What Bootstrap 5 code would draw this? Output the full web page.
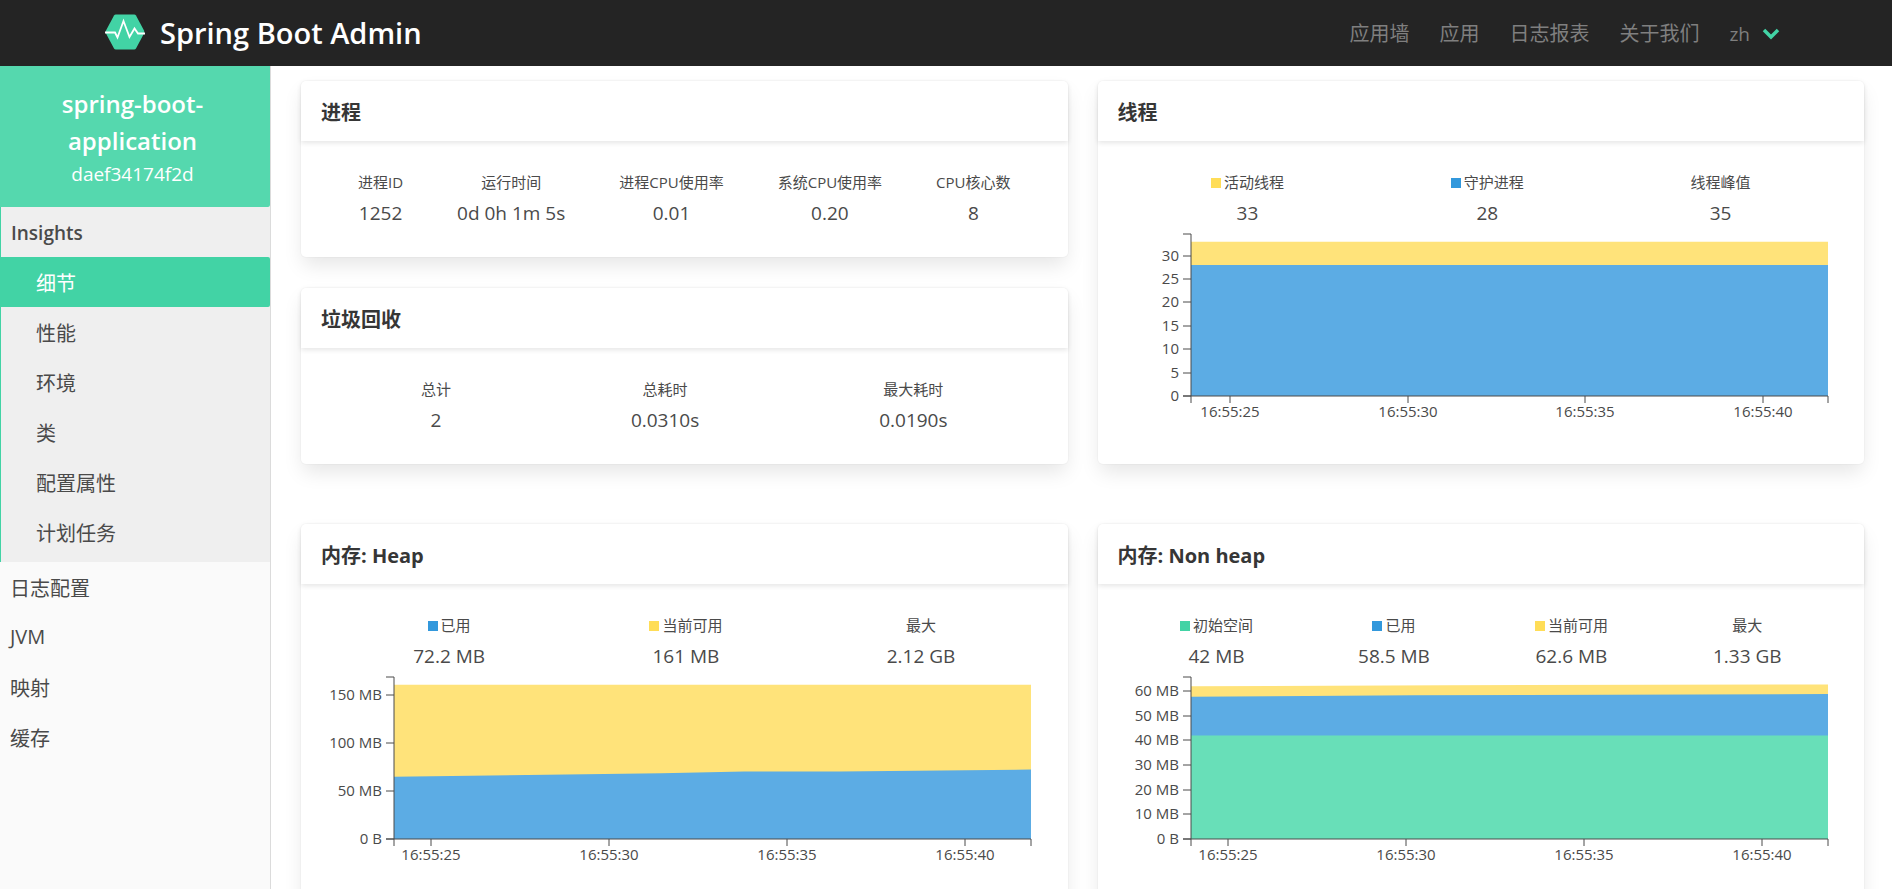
<!DOCTYPE html>
<html lang="zh">
<head>
<meta charset="utf-8">
<meta name="viewport" content="width=device-width, initial-scale=1">
<title>Spring Boot Admin</title>
<link href="https://cdn.jsdelivr.net/npm/bootstrap@5.3.0/dist/css/bootstrap.min.css" rel="stylesheet">
<style>
  :root {
    --sba-green: #42d3a5;
    --sba-blue: #3298dc;
    --sba-yellow: #ffdd57;
  }
  body {
    font-family: "Open Sans", "Noto Sans CJK SC", sans-serif;
    font-size: 20px;
    line-height: 30px;
    color: #4a4a4a;
    background: #fff;
  }
  a { color: inherit; text-decoration: none; }

  .topbar { height: 66px; padding: 0 105px; background: #242424; }
  .topbar .navbar-brand { gap: 15px; font-size: 29px; font-weight: 600; line-height: 36px; color: #fff; }
  .topbar .navbar-nav { gap: 30px; }
  .topbar .navbar-nav .nav-link { padding: 2px 0 0; color: #7f7f7f; }
  .topbar .navbar-nav .lang-btn { gap: 12px; font-size: 19px; padding-right: 7px; border: 0; background: none; }
  .topbar .lang-btn::after { display: none; }

  .sidebar { width: 271px; background: #fafafa; border-right: 1px solid #dbdbdb; }
  .instance { padding: 19px 20px 18px 15px; background: #55d8ae; color: #fff; border-radius: 0 0 2px 0; }
  .instance strong { font-size: 24px; font-weight: 600; line-height: 37px; }
  .instance span { font-size: 19px; line-height: 30px; }
  .side-group { background: #efefef; border-left: 1px solid var(--sba-green); padding-bottom: 5px; }
  .side-link { display: block; padding: 12px 10px 8px; }
  .side-link.side-latin { padding-top: 10px; padding-bottom: 10px; }
  .side-group .side-head { font-size: 19px; font-weight: 600; padding-top: 11px; padding-bottom: 9px; }
  .side-group .side-sub { padding-left: 35px; }
  .side-group .side-sub.active { margin-left: -1px; padding-left: 36px; color: #fff; background: var(--sba-green); border-radius: 0 2px 2px 0; }

  .content { padding: 15px 28px 30px 30px; overflow-y: auto; scrollbar-width: none; }
  .content::-webkit-scrollbar { display: none; }
  .content .row { --bs-gutter-x: 30px; }
  .row-memory { margin-top: 60px; }
  .panel { border: 0; border-radius: 5px; box-shadow: 0 10px 20px -2px rgba(10,10,10,.1), 0 0 0 1px rgba(10,10,10,.02); }
  .panel .card-header { padding: 17px 20px 13px; border: 0; background: none; box-shadow: 0 2px 5px rgba(10,10,10,.1); }
  .panel h2 { margin: 0; font-size: 20px; line-height: 30px; font-weight: 700; color: #363636; }
  .panel .card-body { padding: 30px 30px 29px; }
  .stat-name { font-size: 15px; line-height: 22px; margin-bottom: 5px; }
  .stat-value { font-size: 19px; line-height: 30px; }
  .swatch { width: 10px; height: 10px; margin-right: 3px; display: inline-block; }
  .swatch-blue { background: var(--sba-blue); }
  .swatch-yellow { background: var(--sba-yellow); }
  .swatch-green { background: var(--sba-green); }

  .chart { height: 207px; }
  .chart svg { display: block; width: 100%; height: 207px; overflow: visible; }
  .chart text { font-size: 15px; fill: #4a4a4a; }
  .chart .axis { fill: none; stroke: #4a4a4a; stroke-width: 1; }
  .area-blue { fill: #5cace4; }
  .area-yellow { fill: #ffe37a; }
  .area-green { fill: #68dfb8; }
</style>
</head>
<body class="vh-100 d-flex flex-column overflow-hidden">

<nav class="topbar navbar navbar-expand flex-shrink-0">
  <a class="navbar-brand d-flex align-items-center p-0 m-0" href="#">
    <svg width="40" height="40" viewBox="0 0 40 40" aria-hidden="true">
      <path d="M10.800 1.500h18.400q1.200 0 1.800 1l8 15q.600 1.500 0 3l-8 15q-.600 1-1.800 1H10.800q-1.200 0-1.800-1l-8-15q-.600-1.500 0-3l8-15q.600-1 1.800-1z" fill="#42d3a5"/>
      <path d="M0 19.500h10l2.500 5L18.500 8l6 16 5-8.500 3.500 5h7" fill="none" stroke="#fff" stroke-width="1.800"/>
    </svg>
    <span>Spring Boot Admin</span>
  </a>
  <ul class="navbar-nav ms-auto">
    <li class="nav-item"><a class="nav-link" href="#">应用墙</a></li>
    <li class="nav-item"><a class="nav-link" href="#">应用</a></li>
    <li class="nav-item"><a class="nav-link" href="#">日志报表</a></li>
    <li class="nav-item"><a class="nav-link" href="#">关于我们</a></li>
    <li class="nav-item dropdown">
      <button class="nav-link lang-btn dropdown-toggle d-flex align-items-center" type="button" data-bs-toggle="dropdown" aria-expanded="false">zh
        <svg width="18" height="12" viewBox="0 0 18 12" aria-hidden="true"><path d="M2 2l7 7 7-7" fill="none" stroke="#42d3a5" stroke-width="3.500"/></svg>
      </button>
      <ul class="dropdown-menu dropdown-menu-end">
        <li><a class="dropdown-item" href="#">en</a></li>
        <li><a class="dropdown-item" href="#">zh</a></li>
      </ul>
    </li>
  </ul>
</nav>

<div class="d-flex flex-fill overflow-hidden">
  <aside class="sidebar flex-shrink-0">
    <a class="instance d-flex flex-column text-center" href="#">
      <strong>spring-boot-<wbr>application</strong>
      <span>daef34174f2d</span>
    </a>
    <div class="side-group">
      <a class="side-link side-head" href="#">Insights</a>
      <a class="side-link side-sub active" href="#" aria-current="page">细节</a>
      <a class="side-link side-sub" href="#">性能</a>
      <a class="side-link side-sub" href="#">环境</a>
      <a class="side-link side-sub" href="#">类</a>
      <a class="side-link side-sub" href="#">配置属性</a>
      <a class="side-link side-sub" href="#">计划任务</a>
    </div>
    <a class="side-link" href="#">日志配置</a>
    <a class="side-link side-latin" href="#">JVM</a>
    <a class="side-link" href="#">映射</a>
    <a class="side-link" href="#">缓存</a>
  </aside>

  <main class="content flex-fill">
    <div class="row">
      <div class="col-6 d-flex flex-column">
        <section class="card panel mb-auto">
          <div class="card-header"><h2>进程</h2></div>
          <div class="card-body d-flex text-center">
            <div class="flex-fill"><div class="stat-name">进程ID</div><div class="stat-value">1252</div></div>
            <div class="flex-fill"><div class="stat-name">运行时间</div><div class="stat-value">0d 0h 1m 5s</div></div>
            <div class="flex-fill"><div class="stat-name">进程CPU使用率</div><div class="stat-value">0.01</div></div>
            <div class="flex-fill"><div class="stat-name">系统CPU使用率</div><div class="stat-value">0.20</div></div>
            <div class="flex-fill"><div class="stat-name">CPU核心数</div><div class="stat-value">8</div></div>
          </div>
        </section>
        <section class="card panel">
          <div class="card-header"><h2>垃圾回收</h2></div>
          <div class="card-body d-flex text-center">
            <div class="flex-fill"><div class="stat-name">总计</div><div class="stat-value">2</div></div>
            <div class="flex-fill"><div class="stat-name">总耗时</div><div class="stat-value">0.0310s</div></div>
            <div class="flex-fill"><div class="stat-name">最大耗时</div><div class="stat-value">0.0190s</div></div>
          </div>
        </section>
      </div>
      <div class="col-6">
        <section class="card panel">
          <div class="card-header"><h2>线程</h2></div>
          <div class="card-body">
            <div class="d-flex text-center">
              <div class="flex-fill"><div class="stat-name"><span class="swatch swatch-yellow"></span>活动线程</div><div class="stat-value">33</div></div>
              <div class="flex-fill"><div class="stat-name"><span class="swatch swatch-blue"></span>守护进程</div><div class="stat-value">28</div></div>
              <div class="flex-fill"><div class="stat-name">线程峰值</div><div class="stat-value">35</div></div>
            </div>
            <div class="chart" data-chart="threads"></div>
          </div>
        </section>
      </div>
    </div>

    <div class="row row-memory">
      <div class="col-6">
        <section class="card panel">
          <div class="card-header"><h2>内存: Heap</h2></div>
          <div class="card-body">
            <div class="d-flex text-center">
              <div class="flex-fill"><div class="stat-name"><span class="swatch swatch-blue"></span>已用</div><div class="stat-value">72.2 MB</div></div>
              <div class="flex-fill"><div class="stat-name"><span class="swatch swatch-yellow"></span>当前可用</div><div class="stat-value">161 MB</div></div>
              <div class="flex-fill"><div class="stat-name">最大</div><div class="stat-value">2.12 GB</div></div>
            </div>
            <div class="chart" data-chart="heap"></div>
          </div>
        </section>
      </div>
      <div class="col-6">
        <section class="card panel">
          <div class="card-header"><h2>内存: Non heap</h2></div>
          <div class="card-body">
            <div class="d-flex text-center">
              <div class="flex-fill"><div class="stat-name"><span class="swatch swatch-green"></span>初始空间</div><div class="stat-value">42 MB</div></div>
              <div class="flex-fill"><div class="stat-name"><span class="swatch swatch-blue"></span>已用</div><div class="stat-value">58.5 MB</div></div>
              <div class="flex-fill"><div class="stat-name"><span class="swatch swatch-yellow"></span>当前可用</div><div class="stat-value">62.6 MB</div></div>
              <div class="flex-fill"><div class="stat-name">最大</div><div class="stat-value">1.33 GB</div></div>
            </div>
            <div class="chart" data-chart="nonheap"></div>
          </div>
        </section>
      </div>
    </div>
  </main>
</div>

<script src="https://cdn.jsdelivr.net/npm/bootstrap@5.3.0/dist/js/bootstrap.bundle.min.js"></script>
<script>
  // Series points are [share of the time span, value].
  const times = ['16:55:25', '16:55:30', '16:55:35', '16:55:40'];
  const charts = {
    threads: {
      max: 34.65, step: 5, unit: '', first: 0.062, gap: 0.2785,
      series: [
        { cls: 'area-yellow', points: [[0, 33], [1, 33]] },
        { cls: 'area-blue', points: [[0, 28], [1, 28]] }
      ]
    },
    heap: {
      max: 169, step: 50, unit: ' MB', first: 0.058, gap: 0.2796,
      series: [
        { cls: 'area-yellow', points: [[0, 161], [1, 161]] },
        { cls: 'area-blue', points: [[0, 65], [0.42, 68.6], [0.55, 70.3], [0.7, 70.4], [1, 72.5]] }
      ]
    },
    nonheap: {
      max: 65.7, step: 10, unit: ' MB', first: 0.058, gap: 0.2795,
      series: [
        { cls: 'area-yellow', points: [[0, 61.9], [0.4, 62.4], [1, 62.7]] },
        { cls: 'area-blue', points: [[0, 57.7], [0.35, 58.3], [1, 58.8]] },
        { cls: 'area-green', points: [[0, 42], [1, 42]] }
      ]
    }
  };
  const edge = { left: 63, right: 6, top: 6, height: 162 };

  function draw(box) {
    const c = charts[box.dataset.chart];
    const w = Math.floor(box.getBoundingClientRect().width) - edge.left - edge.right;
    const base = edge.top + edge.height;
    const x = s => edge.left + s * w;
    const y = v => base - v / c.max * edge.height;
    let out = '';
    for (const s of c.series) {
      const line = s.points.map(p => x(p[0]) + ' ' + y(p[1])).join('L');
      out += `<path class="${s.cls}" d="M${x(0)} ${base}L${line}L${x(1)} ${base}Z"/>`;
    }
    out += `<path class="axis" d="M${x(0) - 8} ${edge.top}H${x(0)}V${base}H${x(0) - 8}M${x(0)} ${base + 7}V${base}H${x(1)}V${base + 7}"/>`;
    for (let v = 0; v < c.max; v += c.step) {
      const ty = Math.round(y(v));
      const label = v === 0 && c.unit ? '0 B' : v + c.unit;
      out += `<path class="axis" d="M${x(0) - 8} ${ty}H${x(0)}"/><text x="${x(0) - 12}" y="${ty + 5}" text-anchor="end">${label}</text>`;
    }
    times.forEach((t, i) => {
      const tx = Math.round(x(c.first + i * c.gap));
      out += `<path class="axis" d="M${tx} ${base}V${base + 7}"/><text x="${tx}" y="${base + 21}" text-anchor="middle">${t}</text>`;
    });
    box.innerHTML = `<svg role="img" aria-label="${box.dataset.chart}">${out}</svg>`;
  }
  const drawAll = () => document.querySelectorAll('.chart').forEach(draw);
  drawAll();
  window.addEventListener('resize', drawAll);
</script>
</body>
</html>
